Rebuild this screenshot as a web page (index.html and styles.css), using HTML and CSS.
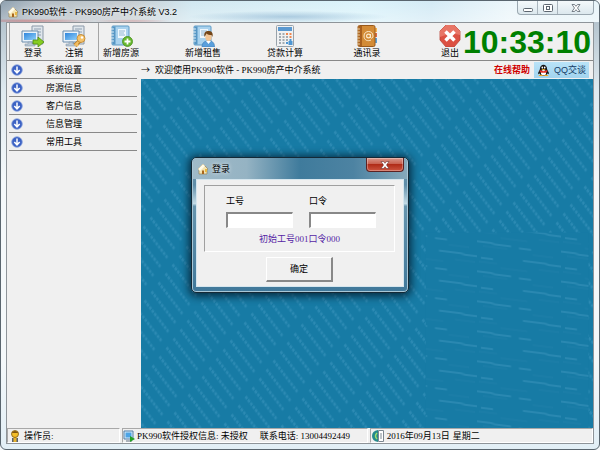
FILE: index.html
```html
<!DOCTYPE html>
<html lang="zh-CN">
<head>
    <meta charset="UTF-8">
    <meta name="viewport" content="width=device-width, initial-scale=1.0">
    <title>PK990软件 - PK990房产中介系统 V3.2</title>
    <link rel="stylesheet" href="styles.css">
</head>
<body>
    <!-- shared icon parts -->
    <svg class="defs" aria-hidden="true">
        <defs>
            <linearGradient id="screen" x1="0" y1="0" x2="1" y2="1">
                <stop offset="0" stop-color="#2f86dc"/>
                <stop offset="1" stop-color="#8fd0fa"/>
            </linearGradient>
            <symbol id="house" viewBox="0 0 12 12">
                <path d="M1 6 6 1l5 5-1 1v4H2V7z" fill="#f4e3b0" stroke="#9a8458" stroke-width=".7"/>
                <path d="M1 6 6 1l2 2-5 5z" fill="#fffbe8"/>
                <path d="M5 11V7.500h2V11z" fill="#a8651c"/>
                <path d="M8 6h2v3H8z" fill="#e8b944"/>
            </symbol>
            <symbol id="computer" viewBox="0 0 24 22">
                <path d="M11 1h11v18H11z" fill="#dfe6ec" stroke="#8b99a8"/>
                <path d="M13 4h7M13 7h7M13 10h7" stroke="#8fa0b0"/>
                <path d="M1 6h16v11H1z" fill="#e9f2fa" stroke="#6b8cab"/>
                <path d="M3 8h12v7H3z" fill="url(#screen)"/>
                <path d="M7 17h4v2h3v2H4v-2h3z" fill="#b7c6d4" stroke="#7d92a6" stroke-width=".5"/>
            </symbol>
            <symbol id="notebook" viewBox="0 0 24 22">
                <rect x="3" y="1" width="17" height="19" rx="1" fill="#a9d2ee" stroke="#5c9ac5"/>
                <path d="M3.500 1.500h3v18h-3z" fill="#5796c4"/>
                <path d="M2 4h3M2 7h3M2 10h3M2 13h3M2 16h3" stroke="#dcecf6"/>
                <path d="M9 4h8v9H9z" fill="#eef7fd"/>
                <path d="M10 6h6M10 8h5M10 10h6" stroke="#7ba7c6" stroke-width=".8"/>
            </symbol>
            <symbol id="down" viewBox="0 0 12 12">
                <circle cx="6" cy="6" r="5.300" fill="#3c62c4" stroke="#8da4dd" stroke-width=".8"/>
                <path d="M6 2.600v6M3.300 6 6 8.800 8.700 6" fill="none" stroke="#fff" stroke-width="1.500"/>
            </symbol>
        </defs>
    </svg>

    <div class="window">
        <header class="titlebar">
            <svg class="icon-small"><use href="#house"/></svg>
            <h1>PK990软件 - PK990房产中介系统 V3.2</h1>
            <div class="controls">
                <button type="button" aria-label="最小化">
                    <svg viewBox="0 0 10 8"><rect x=".5" y="4.500" width="9" height="3" rx="1" fill="#fff" stroke="#5c6670"/></svg>
                </button>
                <button type="button" aria-label="最大化">
                    <svg viewBox="0 0 10 8"><rect x=".5" y=".5" width="9" height="7" rx="1" fill="#fff" stroke="#5c6670"/><rect x="3.500" y="2.500" width="3" height="3" fill="none" stroke="#5c6670"/></svg>
                </button>
                <button type="button" class="wide" aria-label="关闭">
                    <svg viewBox="0 0 10 8"><path d="M1 .5h2.500L5 2.300 6.500.5H9L6.500 4 9 7.500H6.500L5 5.700 3.500 7.500H1L3.500 4z" fill="#fff" stroke="#5c6670" stroke-width=".8"/></svg>
                </button>
            </div>
        </header>

        <div class="client">
            <div class="toolbar">
                <div class="tools">
                    <button type="button" class="tool">
                        <svg viewBox="0 0 24 22"><use href="#computer"/><path d="M12 15h5v-3l6 5-6 5v-3h-5z" fill="#86cc22" stroke="#518d10" stroke-width=".8"/></svg>
                        登录
                    </button>
                    <button type="button" class="tool">
                        <svg viewBox="0 0 24 22"><use href="#computer"/><path d="M13 20.500 18 15.500" stroke="#b67a24" stroke-width="4"/><path d="m12.800 20.500 5-5M14 18.500l2 2.500" stroke="#f3bd60" stroke-width="2.400"/><circle cx="19" cy="13.500" r="4" fill="#f5c36b" stroke="#bd8029" stroke-width=".8"/><circle cx="20" cy="12.500" r="1.200" fill="#fff"/></svg>
                        注销
                    </button>
                </div>
                <div class="tools main-tools">
                    <button type="button" class="tool">
                        <svg viewBox="0 0 24 22"><use href="#notebook"/><circle cx="18.500" cy="16.500" r="5" fill="#67b82f" stroke="#468e1c" stroke-width=".8"/><path d="M18.500 13.500v6M15.500 16.500h6" stroke="#fff" stroke-width="1.800"/></svg>
                        新增房源
                    </button>
                    <button type="button" class="tool">
                        <svg viewBox="0 0 24 22"><use href="#notebook"/><path d="M11 22c0-5 3-6 6.500-6s6 1 6 6z" fill="#5a9fdc" stroke="#397ab5" stroke-width=".6"/><path d="m15 16 2.500 3 2.500-3z" fill="#fff"/><ellipse cx="17.500" cy="12" rx="3.200" ry="4" fill="#f2c595"/><path d="M13.500 12c-1-5 1.500-6 4-6s5 1 4 6l-1-2c-2 0-4-.5-5-1.500z" fill="#744516"/></svg>
                        新增租售
                    </button>
                    <button type="button" class="tool">
                        <svg viewBox="0 0 24 22"><rect x="3.500" y=".5" width="17" height="21" rx="1" fill="#f0f1f2" stroke="#98a2aa"/><path d="M5 2h14v4H5z" fill="#5998d0"/><path d="M6 9h2M9.500 9h2M13 9h2M6 12h2M9.500 12h2M13 12h2M6 15h2M9.500 15h2M13 15h2M6 18h2M9.500 18h2" stroke="#a3abb2" stroke-width="2"/><path d="M13 9h2M16.500 9h2M16.500 12h2" stroke="#ee8750" stroke-width="2"/><path d="M16.500 15h2M13 18h2M16.500 17v2h2v-2z" stroke="#4e96d2" stroke-width="2"/></svg>
                        贷款计算
                    </button>
                    <button type="button" class="tool">
                        <svg viewBox="0 0 24 22"><path d="M19 3h3v4h-3z" fill="#f6b44f"/><path d="M19 8h3v4h-3z" fill="#dc6a45"/><path d="M19 13h3v5h-3z" fill="#579fd8"/><rect x="3" y=".5" width="17" height="21" rx="1.500" fill="#d38b36" stroke="#99591b"/><path d="M4 1h3v20H4z" fill="#a9601e"/><path d="M2 4h3M2 7h3M2 10h3M2 13h3M2 16h3M2 19h3" stroke="#e6cda6"/><circle cx="13.500" cy="11" r="1.900" fill="none" stroke="#fbe9cb" stroke-width="1.200"/><path d="M15.500 9v3c0 2 2.500 1.500 2.500-1 0-6-9-6-9 0 0 4.500 4 5.500 7 4" fill="none" stroke="#fbe9cb"/></svg>
                        通讯录
                    </button>
                    <button type="button" class="tool exit">
                        <svg viewBox="0 0 24 22"><path d="M8 0h8l6 6v9l-6 7H8l-6-7V6z" fill="#dc5143" stroke="#b94236" stroke-width=".8"/><path d="M8 0h8l6 6v4C16 8 9 9 2 12V6z" fill="#e87566"/><path d="m7.500 6.500 9 9m0-9-9 9" stroke="#fff" stroke-width="3.500"/></svg>
                        退出
                    </button>
                </div>
                <time class="clock">10:33:10</time>
            </div>

            <div class="workspace">
                <nav class="sidebar">
                    <a href="#"><svg><use href="#down"/></svg><span>系统设置</span></a>
                    <a href="#"><svg><use href="#down"/></svg><span>房源信息</span></a>
                    <a href="#"><svg><use href="#down"/></svg><span>客户信息</span></a>
                    <a href="#"><svg><use href="#down"/></svg><span>信息管理</span></a>
                    <a href="#"><svg><use href="#down"/></svg><span>常用工具</span></a>
                </nav>
                <main class="content">
                    <div class="welcome">
                        <span class="arrow">→</span>
                        <span>欢迎使用PK990软件 - PK990房产中介系统</span>
                        <a class="help" href="#">在线帮助</a>
                        <a class="qq" href="#">
                            <svg viewBox="0 0 14 14"><path d="M3 6c0-7 8-7 8 0l2 4-1 1-1-1c0 4-8 4-8 0l-1 1-1-1z" fill="#171717"/><ellipse cx="7" cy="9.500" rx="2.800" ry="3" fill="#fff"/><ellipse cx="5.700" cy="3.800" rx=".9" ry="1.200" fill="#fff"/><ellipse cx="8.300" cy="3.800" rx=".9" ry="1.200" fill="#fff"/><path d="M4.500 5.500h5L7 6.700z" fill="#f8b321"/><path d="M3 6.500q4 2.500 8 0v2q-4 2-8 0z" fill="#e4322a"/><path d="M1.500 13q2-3 5.500 0 3.500-3 5.500 0z" fill="#f6a51c"/></svg>
                            QQ交谈
                        </a>
                    </div>
                    <div class="backdrop">
                        <svg width="100%" height="100%" aria-hidden="true">
                            <defs>
                                <pattern id="slant" width="10" height="10" patternUnits="userSpaceOnUse" patternTransform="matrix(.7 -.9 2.900 3.800 -3 4)">
                                    <path d="M5 0v8.500" stroke="#2c8ab3" stroke-width="2.400" stroke-dasharray=".6 .25"/>
                                </pattern>
                                <pattern id="streak" width="84" height="30" patternUnits="userSpaceOnUse" patternTransform="skewY(7)">
                                    <path d="M0 1h14l4 1h16M42 3h12M46 15h22l4 1h12M4 17h12" fill="none" stroke="#2a88b1" stroke-width="2"/>
                                    <path d="M6 5h24M56 8h20M2 21h18M24 25h26M62 22h20" stroke="#2080aa"/>
                                </pattern>
                            </defs>
                            <rect width="100%" height="100%" fill="#177ba5"/>
                            <rect width="100%" height="100%" fill="url(#slant)"/>
                            <rect x="63%" y="44%" width="36%" height="56%" fill="#177ba5"/>
                            <rect x="63%" y="44%" width="36%" height="56%" fill="url(#streak)"/>
                        </svg>
                    </div>
                </main>
            </div>

            <footer class="statusbar">
                <div class="pane operator">
                    <svg viewBox="0 0 12 12"><path d="M3 12V8h6v4z" fill="#59616b"/><path d="M4.500 7h3v5h-3z" fill="#e8b32d"/><circle cx="6" cy="4" r="3.500" fill="#f3bd28" stroke="#7d5a13" stroke-width=".8"/><path d="M2.500 3q3.500-4 7 0z" fill="#80540f"/></svg>
                    <span>操作员:</span>
                </div>
                <div class="pane licence">
                    <svg viewBox="0 0 12 12"><path d="M1 1h9v8H1z" fill="#d9edfa" stroke="#517ca5"/><path d="M2.500 2.500h6v5h-6z" fill="#4da4e5"/><path d="M3 11h6" stroke="#677785"/><path d="m7 6 5 3-5 3z" fill="#24a126"/></svg>
                    <span>PK990软件授权信息: 未授权</span>
                    <span>联系电话: 13004492449</span>
                </div>
                <div class="pane date">
                    <svg viewBox="0 0 12 12"><path d="M6 0Q0 1 0 6t6 6z" fill="#268a8c"/><path d="M5 3Q2 6 5 9" fill="none" stroke="#9fe06a" stroke-width="1.500"/><path d="M6.500.5h5v11h-5z" fill="#fff" stroke="#7b8791"/><path d="M8 4h2M8 6h2M8 8h2" stroke="#7b8791"/></svg>
                    <span>2016年09月13日</span>
                    <span>星期二</span>
                </div>
            </footer>
        </div>

        <form class="dialog">
            <div class="dialog-title">
                <svg class="icon-small"><use href="#house"/></svg>
                <h2>登录</h2>
                <button type="button" class="close" aria-label="关闭登录">
                    <svg viewBox="0 0 10 8"><path d="M1 .5h2.500L5 2.300 6.500.5H9L6.500 4 9 7.500H6.500L5 5.700 3.500 7.500H1L3.500 4z" fill="#fff" stroke="#6b3030" stroke-width=".6"/></svg>
                </button>
            </div>
            <div class="dialog-body">
                <div class="group">
                    <div class="fields">
                        <div class="field">
                            <label for="user">工号</label>
                            <input type="text" id="user">
                        </div>
                        <div class="field">
                            <label for="password">口令</label>
                            <input type="password" id="password">
                        </div>
                    </div>
                    <p class="hint">初始工号001口令000</p>
                </div>
                <button type="button" class="ok">确定</button>
            </div>
        </form>
    </div>
</body>
</html>
```
FILE: styles.css
```css
* {
    box-sizing: border-box;
}

body {
    margin: 0;
    background: #f4f8fa;
    color: #000;
    font: 9px/12px "Liberation Serif", "Noto Sans CJK SC", serif;
}

button, input {
    font: inherit;
    color: inherit;
    margin: 0;
    padding: 0;
}

a {
    color: inherit;
    text-decoration: none;
}

svg {
    display: block;
    flex: none;
}

.defs {
    position: absolute;
    width: 0;
    height: 0;
}

/* Outer glass frame */
.window {
    position: relative;
    display: flex;
    flex-direction: column;
    height: 100vh;
    padding: 0 5px 5px;
    border: 1px solid #59656e;
    border-radius: 6px;
    background: linear-gradient(#a9b9c4, #dfeaf0 20%, #f4f8fa 40%, #f4f8fa 80%, #e2eff6);
    overflow: hidden;
}

.titlebar {
    display: flex;
    align-items: center;
    gap: 3px;
    height: 21px;
    margin: 0 -5px;
    padding-left: 6px;
    background:
        radial-gradient(ellipse at 5% 95%, rgba(205, 100, 100, .6), transparent 8%),
        radial-gradient(ellipse at 22% 95%, rgba(205, 110, 110, .4), transparent 6%),
        radial-gradient(ellipse 100px 6px at 48% 75%, rgba(120, 165, 200, .5), transparent),
        linear-gradient(rgba(255, 255, 255, .1), rgba(255, 255, 255, .4)),
        linear-gradient(90deg, #8195a6, #a9b5be 6%, #c0c8cd 22%, #cce5ef 32%, #d7f2fa 60%, #cfe8f4 72%, #eaf5fa 85%, #e4f2f8);
}

.titlebar h1 {
    margin: 0;
    font: 9px/12px "Liberation Sans", "Noto Sans CJK SC", sans-serif;
    text-shadow: 0 0 4px #fff;
}

.icon-small {
    width: 12px;
    height: 12px;
}

.controls {
    display: flex;
    align-self: flex-start;
    margin-left: auto;
    margin-right: 5px;
    border: 1px solid #9aa7b0;
    border-top: 0;
    border-radius: 0 0 4px 4px;
    background: linear-gradient(#f4f9fb, #dce8ee);
}

.controls button {
    display: flex;
    align-items: center;
    justify-content: center;
    width: 20px;
    height: 13px;
    border: 0;
    border-right: 1px solid #a9b5bd;
    background: none;
}

.controls .wide {
    width: 35px;
    border-right: 0;
}

.controls svg {
    width: 10px;
    height: 8px;
}

.client {
    display: flex;
    flex-direction: column;
    flex: 1;
    min-height: 0;
    border: 1px solid #8e9499;
    background: #f0f0f0;
}

/* Toolbar */
.toolbar {
    display: flex;
    align-items: center;
    height: 38px;
    padding-left: 2px;
    border-bottom: 1px solid #888;
}

.tools {
    display: flex;
    gap: 5px;
    height: 100%;
    padding: 2px 6px 0 5px;
    border-left: 1px solid #a5a5a5;
}

.main-tools {
    gap: 46px;
    padding: 2px 0 0 4px;
}

.tool {
    display: flex;
    flex-direction: column;
    align-items: center;
    width: 36px;
    border: 0;
    background: none;
    white-space: nowrap;
}

.tool svg {
    width: 24px;
    height: 22px;
}

.exit {
    width: 24px;
    margin-left: 7px;
}

.clock {
    margin-left: auto;
    padding-right: 2px;
    color: #008000;
    font: bold 32px/36px "Liberation Sans", sans-serif;
}

/* Sidebar and content */
.workspace {
    display: flex;
    flex: 1;
    min-height: 0;
}

.sidebar {
    width: 134px;
    padding: 0 4px 0 2px;
}

.sidebar a {
    display: flex;
    align-items: center;
    height: 18px;
    padding-left: 2px;
    border-bottom: 1px solid #888;
}

.sidebar svg {
    width: 12px;
    height: 12px;
}

.sidebar span {
    margin-left: 23px;
}

.content {
    display: flex;
    flex-direction: column;
    flex: 1;
}

.welcome {
    display: flex;
    align-items: center;
    height: 18px;
    padding-right: 4px;
}

.arrow {
    margin-right: 5px;
    font-family: "Noto Sans CJK SC", sans-serif;
}

.help {
    margin-left: auto;
    margin-right: 4px;
    color: #d00000;
    font-weight: bold;
}

.qq {
    display: flex;
    align-items: center;
    gap: 4px;
    height: 16px;
    padding: 0 3px;
    background: linear-gradient(#b9e3f8, #a2d4ef);
    color: #143c66;
    font: 9px/12px "Liberation Sans", "Noto Sans CJK SC", sans-serif;
}

.qq svg {
    width: 13px;
    height: 13px;
}

.backdrop {
    flex: 1;
    min-height: 0;
    background: #177ba5;
}

/* Status bar */
.statusbar {
    display: flex;
    gap: 2px;
    height: 15px;
}

.pane {
    display: flex;
    align-items: center;
    gap: 3px;
    padding-left: 1px;
    border: 1px solid #fff;
    border-top-color: #a8a8a8;
    border-left-color: #a8a8a8;
    white-space: nowrap;
}

.pane svg {
    width: 12px;
    height: 12px;
}

.operator {
    flex: 112;
}

.licence {
    flex: 248;
    padding-left: 0;
    gap: 2px;
}

.licence span + span {
    margin-left: 10px;
}

.date {
    flex: 224;
}

/* Login dialog floats over the workspace */
.dialog {
    position: absolute;
    top: 50%;
    left: 50%;
    transform: translate(-50%, -50%);
    width: 218px;
    padding: 0 4px 5px;
    border: 1px solid #142936;
    border-radius: 5px;
    background: linear-gradient(#6f9ab2, #5f8da8 20%, #c3dbe6 34%, #6795ae 36%, #40789a);
    box-shadow: inset 0 0 0 1px #a9c7d6, 0 1px 8px 2px rgba(0, 20, 35, .8);
}

.dialog-title {
    display: flex;
    align-items: center;
    gap: 3px;
    height: 21px;
    margin: 0 -3px;
    padding-left: 4px;
    background: linear-gradient(90deg, #9fbac8, #95b3c3 25%, #3f7b9c 50%, #4d83a2 75%, #86a9bb);
    border-radius: 4px 4px 0 0;
}

.dialog-title h2 {
    margin: 0;
    font: 9px/12px "Liberation Sans", "Noto Sans CJK SC", sans-serif;
    text-shadow: 0 0 4px #fff;
}

.close {
    display: flex;
    align-items: center;
    justify-content: center;
    align-self: flex-start;
    width: 38px;
    height: 14px;
    margin-left: auto;
    margin-right: 3px;
    border: 1px solid #5c2222;
    border-top: 0;
    border-radius: 0 0 4px 4px;
    background: linear-gradient(#d9988c, #c8614f 45%, #b02c18 50%, #cc5540);
    box-shadow: inset 0 0 0 1px rgba(255, 255, 255, .3);
}

.close svg {
    width: 10px;
    height: 8px;
}

.dialog-body {
    display: flex;
    flex-direction: column;
    align-items: center;
    gap: 5px;
    padding: 5px 8px 4px 7px;
    border: 1px solid #d6e6ee;
    background: #f0f0f0;
}

.group {
    align-self: stretch;
    height: 67px;
    padding-top: 9px;
    border: 1px solid #fff;
    border-top-color: #a0a0a0;
    border-left-color: #a0a0a0;
}

.fields {
    display: flex;
    gap: 16px;
    padding: 0 18px 0 21px;
}

.field {
    flex: 1;
    min-width: 0;
}

.field label {
    display: block;
}

.field input {
    display: block;
    width: 100%;
    height: 16px;
    margin-top: 5px;
    border: 1px solid #fff;
    border-top: 2px solid #888;
    border-left: 2px solid #888;
    background: #fff;
}

.hint {
    margin: 5px 0 0;
    text-align: center;
    color: #5525a5;
}

.ok {
    width: 67px;
    height: 25px;
    border: 1px solid #fff;
    border-right: 2px solid #888;
    border-bottom: 2px solid #888;
    background: #f0f0f0;
}
```
